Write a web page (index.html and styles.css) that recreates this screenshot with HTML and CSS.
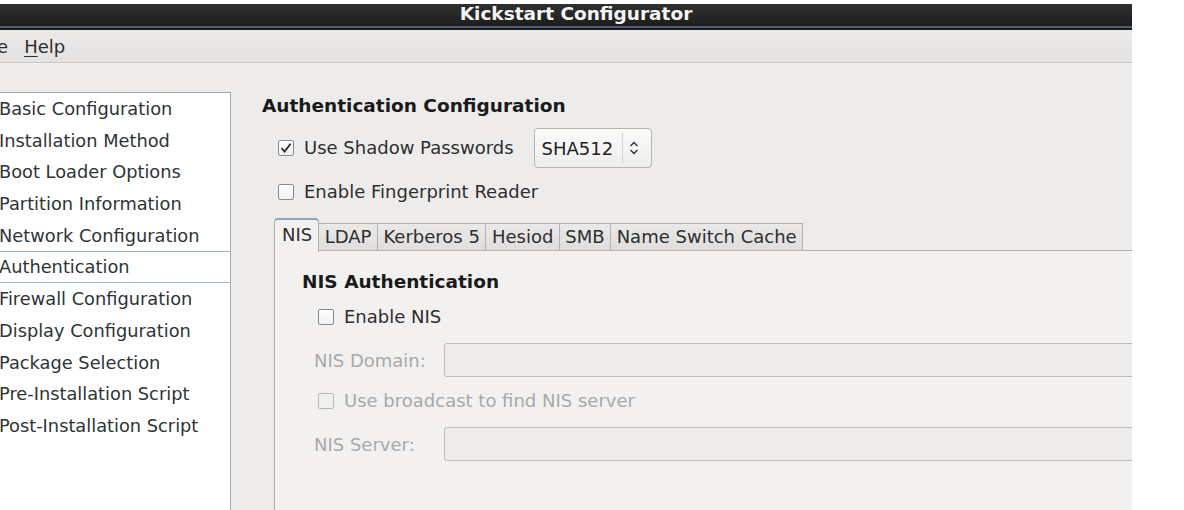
FILE: index.html
```html
<!DOCTYPE html>
<html>
<head>
<meta charset="utf-8">
<link rel="stylesheet" href="styles.css">
</head>
<body>
<div class="window">
  <div class="titlebar"><span class="title">Kickstart Configurator</span></div>
  <div class="menubar">
    <span class="menu-item menu-file">File</span>
    <span class="menu-item"><u>H</u>elp</span>
  </div>
  <div class="content">
    <ul class="sidebar">
      <li>Basic Configuration</li>
      <li>Installation Method</li>
      <li>Boot Loader Options</li>
      <li>Partition Information</li>
      <li>Network Configuration</li>
      <li class="selected">Authentication</li>
      <li>Firewall Configuration</li>
      <li>Display Configuration</li>
      <li>Package Selection</li>
      <li>Pre-Installation Script</li>
      <li>Post-Installation Script</li>
    </ul>
    <div class="main">
      <div class="heading">Authentication Configuration</div>
      <div class="row shadow-row">
        <span class="check checked"><svg width="12" height="12" viewBox="0 0 12 12"><path d="M1.5 6.2 L4.6 9.6 L10.6 1.8" fill="none" stroke="#2a2a2a" stroke-width="1.8"/></svg></span>
        <span class="label">Use Shadow Passwords</span>
        <div class="combo">
          <span class="combo-text">SHA512</span>
          <span class="combo-sep"></span>
          <svg class="combo-arrows" width="10" height="16" viewBox="0 0 10 16"><path d="M1.5 6 L5 2.5 L8.5 6 M1.5 10 L5 13.5 L8.5 10" fill="none" stroke="#333" stroke-width="1.4"/></svg>
        </div>
      </div>
      <div class="row finger-row">
        <span class="check"></span>
        <span class="label">Enable Fingerprint Reader</span>
      </div>
      <div class="tabs">
        <div class="tabstrip">
          <span class="tab active">NIS</span>
          <span class="tab">LDAP</span>
          <span class="tab">Kerberos 5</span>
          <span class="tab">Hesiod</span>
          <span class="tab">SMB</span>
          <span class="tab">Name Switch Cache</span>
          <span class="tab-fill"></span>
        </div>
        <div class="panel">
          <div class="heading">NIS Authentication</div>
          <div class="row nis-enable">
            <span class="check"></span>
            <span class="label">Enable NIS</span>
          </div>
          <div class="field-row domain-row">
            <span class="field-label">NIS Domain:</span>
            <span class="entry"></span>
          </div>
          <div class="row broadcast-row">
            <span class="check disabled"></span>
            <span class="label disabled-text">Use broadcast to find NIS server</span>
          </div>
          <div class="field-row server-row">
            <span class="field-label">NIS Server:</span>
            <span class="entry"></span>
          </div>
        </div>
      </div>
    </div>
  </div>
</div>
</body>
</html>
```

FILE: styles.css
```css
html, body {
  margin: 0;
  padding: 0;
  background: #ffffff;
}
body {
  font-family: "DejaVu Sans", "Liberation Sans", sans-serif;
  font-size: 18px;
  color: #2e3436;
}
.window {
  margin-top: 4px;
  width: 1132px;
  height: 506px;
  overflow: hidden;
  background: #edeceb;
  display: flex;
  flex-direction: column;
}
.titlebar {
  height: 22px;
  background: linear-gradient(#303030, #1d1d1d);
  border-bottom: 2px solid #4d5d72;
  box-shadow: 0 2px 0 #1a1a1a;
  margin-bottom: 2px;
  display: flex;
  justify-content: center;
  align-items: center;
  padding-left: 20px;
}
.title {
  color: #f4f4f4;
  font-weight: bold;
  font-size: 18.5px;
  line-height: 22px;
  position: relative;
  top: -1px;
}
.menubar {
  height: 32px;
  background: linear-gradient(#ebeae8, #e4e3e1);
  border-bottom: 1px solid #c6c5c3;
  box-shadow: 0 1px 0 #f4f3f2;
  display: flex;
  align-items: center;
  margin-left: -22px;
  gap: 16px;
  flex: none;
}
.menu-item {
  color: #2e2e2e;
  line-height: 32px;
  position: relative;
  top: 1px;
}
.menu-item u {
  text-decoration-thickness: 1px;
  text-underline-offset: 3px;
}
.content {
  flex: 1;
  display: flex;
  align-items: flex-start;
  padding-top: 29px;
  min-height: 0;
}
.sidebar {
  list-style: none;
  margin: 0 0 0 -8px;
  padding: 0;
  width: 239px;
  height: 600px;
  flex: none;
  background: #ffffff;
  border: 1px solid #a8a8a6;
  box-sizing: border-box;
  font-size: 17.8px;
}
.sidebar li {
  height: 31.7px;
  line-height: 31.7px;
  padding-left: 6px;
  color: #2e3436;
  box-sizing: border-box;
  white-space: nowrap;
}
.sidebar li.selected {
  border-top: 1px solid #a3b2c4;
  border-bottom: 1px solid #a3b2c4;
  line-height: 29.7px;
}
.main {
  flex: 1;
  padding-left: 31px;
  padding-top: 2px;
  min-width: 0;
}
.heading {
  font-weight: bold;
  font-size: 18.5px;
  color: #1a1a1a;
  line-height: 24px;
  white-space: nowrap;
}
.row {
  display: flex;
  align-items: center;
  white-space: nowrap;
}
.check {
  width: 14px;
  height: 14px;
  border: 1px solid #8a8a88;
  border-radius: 2px;
  background: linear-gradient(#ffffff, #f0f0ef);
  display: inline-flex;
  align-items: center;
  justify-content: center;
  flex: none;
  margin-right: 10px;
}
.check.disabled {
  border-color: #b8b8b6;
  background: #f2f1f0;
}
.label {
  color: #2e2e2e;
  line-height: 24px;
}
.disabled-text {
  color: #a9a9a7;
}
.shadow-row {
  margin-top: 10px;
  padding-left: 16px;
  height: 40px;
}
.combo {
  margin-left: 20px;
  height: 40px;
  width: 118px;
  box-sizing: border-box;
  border: 1px solid #b5b4b2;
  border-radius: 4px;
  background: linear-gradient(#fbfbfa, #efeeed);
  display: flex;
  align-items: center;
}
.combo-text {
  padding-left: 7px;
  width: 80px;
  color: #222;
}
.combo-sep {
  width: 1px;
  height: 30px;
  background: #d4d3d1;
}
.combo-arrows {
  margin-left: 6px;
}
.finger-row {
  margin-top: 12px;
  padding-left: 16px;
  height: 24px;
}
.tabs {
  margin-top: 13px;
  margin-left: 12px;
  width: 1000px;
}
.tabstrip {
  display: flex;
  align-items: flex-end;
  height: 34px;
}
.tab {
  height: 28px;
  box-sizing: border-box;
  border: 1px solid #b3b2b0;
  border-left: none;
  border-bottom: 1px solid #b3b2b0;
  background: linear-gradient(#eae9e7, #dfdedc);
  padding: 0 5.5px 0 5.5px;
  line-height: 26px;
  color: #2e2e2e;
  white-space: nowrap;
}
.tab.active {
  height: 34px;
  border-left: 1px solid #b3b2b0;
  border-top: 2px solid #8ea3bd;
  border-bottom: none;
  border-radius: 4px 4px 0 0;
  background: #f2f1f0;
  padding: 0 6px 0 7px;
  line-height: 30px;
  margin-bottom: -1px;
  position: relative;
  z-index: 1;
}
.tab-fill {
  flex: 1;
  height: 1px;
  background: #b3b2b0;
}
.panel {
  background: #f2f1f0;
  border-left: 1px solid #b3b2b0;
  height: 300px;
  padding-left: 27px;
  padding-top: 19px;
  position: relative;
}
.nis-enable {
  margin-top: 11px;
  padding-left: 16px;
  height: 24px;
}
.field-row {
  display: flex;
  align-items: center;
  height: 34px;
  padding-left: 12px;
}
.domain-row {
  margin-top: 14px;
}
.server-row {
  margin-top: 14px;
}
.field-label {
  width: 130px;
  color: #a9a9a7;
  flex: none;
}
.entry {
  flex: 1;
  height: 34px;
  box-sizing: border-box;
  border: 1px solid #bebdbb;
  border-radius: 3px;
  background: #edeceb;
}
.broadcast-row {
  margin-top: 12px;
  padding-left: 16px;
  height: 24px;
}
```
